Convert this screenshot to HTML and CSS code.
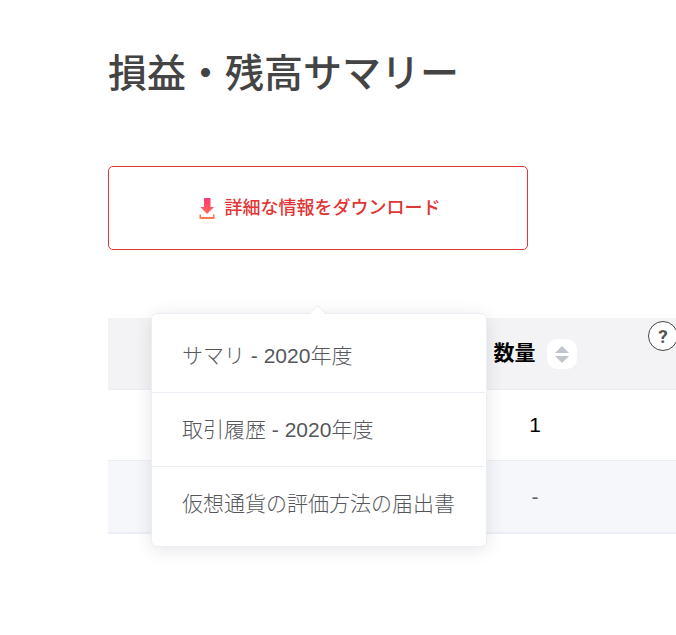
FILE: index.html
```html
<!DOCTYPE html>
<html lang="ja">
<head>
<meta charset="UTF-8">
<meta name="viewport" content="width=device-width, initial-scale=1.0">
<title>損益・残高サマリー</title>
<link rel="stylesheet" href="styles.css">
</head>
<body>
<main class="content">
  <h1>損益・残高サマリー</h1>

  <div class="download">
    <button type="button" class="download-button" aria-haspopup="true" aria-expanded="true">
      <svg class="download-icon" width="16" height="22" viewBox="0 0 16 22" aria-hidden="true">
        <defs>
          <linearGradient id="iconColor" x1="0" y1="0" x2="0" y2="22" gradientUnits="userSpaceOnUse">
            <stop offset="0" stop-color="#ff3378"/>
            <stop offset="1" stop-color="#ff7a50"/>
          </linearGradient>
        </defs>
        <path fill="url(#iconColor)" d="M5 1h6.500v9H15L8 17L1.500 10H5zM0.500 17.500h1.500v2.500h12v-2.500h1.500v4.500h-15z"/>
      </svg>
      <span>詳細な情報をダウンロード</span>
    </button>
    <ul class="download-menu">
      <li><a href="#summary">サマリ - 2020年度</a></li>
      <li><a href="#history">取引履歴 - 2020年度</a></li>
      <li><a href="#form">仮想通貨の評価方法の届出書</a></li>
    </ul>
  </div>

  <div class="table-wrap">
    <table class="data-table">
      <colgroup>
        <col class="col-name">
        <col class="col-value">
        <col class="col-value">
      </colgroup>
      <thead>
        <tr>
          <th></th>
          <th>
            <div class="heading">
              <span>数量</span>
              <button type="button" class="sort" aria-label="並べ替え">
                <svg width="16" height="18" viewBox="0 0 16 18" aria-hidden="true">
                  <path fill="#c0c4cc" d="M8 1L15 8H1zM1 11H15L8 18z"/>
                </svg>
              </button>
            </div>
          </th>
          <th><button type="button" class="help" aria-label="ヘルプ">?</button></th>
        </tr>
      </thead>
      <tbody>
        <tr>
          <td></td>
          <td>1</td>
          <td></td>
        </tr>
        <tr class="total">
          <td></td>
          <td>-</td>
          <td></td>
        </tr>
      </tbody>
    </table>
  </div>
</main>
</body>
</html>
```

FILE: styles.css
```css
body {
  margin: 0;
  background: #fff;
  color: #606266;
  font-family: "Liberation Sans", "Noto Sans CJK JP", sans-serif;
  font-size: 21px;
}
button {
  font-family: inherit;
  cursor: pointer;
}
.content {
  padding: 41px 0 80px 108px;
}
h1 {
  margin: 0 0 67px;
  color: #444;
  font-size: 39px;
  font-weight: 500;
  font-family: "Noto Sans CJK JP", sans-serif;
  line-height: 58px;
}

/* download button and its menu */
.download {
  position: relative;
  width: 420px;
  max-width: 100%;
  margin-bottom: 68px;
}
.download-button {
  display: flex;
  align-items: center;
  justify-content: center;
  gap: 10px;
  width: 100%;
  height: 84px;
  padding: 0 0 0 3px;
  border: 1px solid #e03636;
  border-radius: 5px;
  background: #fff;
  color: #e03636;
  font-size: 18px;
  font-weight: 500;
}
.download-button span {
  padding-bottom: 4px;
}
.download-menu {
  position: absolute;
  top: 100%;
  left: 50%;
  z-index: 10;
  box-sizing: border-box;
  width: 336px;
  margin: 63px 0 0 -167px;
  padding: 5px 1px 6px 0;
  border: 1px solid #ebeef5;
  border-radius: 6px;
  background: #fff;
  box-shadow: 0 3px 18px rgba(0, 0, 0, 0.1);
  list-style: none;
}
.download-menu::before {
  content: "";
  position: absolute;
  top: -7px;
  left: 50%;
  width: 10px;
  height: 10px;
  margin-left: -7px;
  border: 1px solid #ebeef5;
  border-right: 0;
  border-bottom: 0;
  background: #fff;
  transform: rotate(45deg);
}
.download-menu li + li {
  border-top: 1px solid #ebeef5;
}
.download-menu a {
  display: block;
  padding: 0 30px;
  color: #55575b;
  font-weight: 300;
  line-height: 73px;
  text-decoration: none;
  white-space: nowrap;
}

/* balance table */
.table-wrap {
  overflow: hidden;
}
.data-table {
  width: 748px;
  table-layout: fixed;
  border-collapse: separate;
  border-spacing: 0;
}
.col-name {
  width: 320px;
}
.col-value {
  width: 214px;
}
.data-table th,
.data-table td {
  height: 70px;
  padding: 0;
  border-bottom: 1px solid #ebeef5;
  text-align: center;
}
.data-table th {
  position: relative;
  height: 71px;
  background: #f3f3f5;
  color: #000;
  font-weight: 700;
}
.data-table td {
  color: #000;
}
.data-table .total td {
  height: 71px;
  border-bottom-width: 2px;
  background: #f5f7fa;
  color: #606266;
}
.heading {
  display: flex;
  align-items: center;
  justify-content: center;
  gap: 11px;
}
.heading span {
  padding-bottom: 6px;
}
.sort {
  display: flex;
  align-items: center;
  justify-content: center;
  width: 30px;
  height: 30px;
  padding: 0;
  border: 0;
  border-radius: 10px;
  background: #fff;
}
.help {
  position: absolute;
  top: 3px;
  left: 6px;
  width: 30px;
  height: 30px;
  padding: 0;
  border: 1px solid #444;
  border-radius: 50%;
  background: #fff;
  color: #555;
  font-family: Roboto, sans-serif;
  font-size: 19px;
  font-weight: 700;
}
```
